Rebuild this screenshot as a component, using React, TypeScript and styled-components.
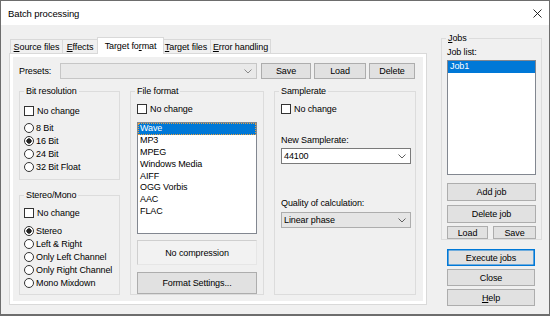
import styled, { createGlobalStyle } from 'styled-components'

const GlobalStyle = createGlobalStyle`
	* {
		box-sizing: border-box;
	}
	body {
		margin: 0;
		background: #fff;
		font-family: 'Liberation Sans', Arial, sans-serif;
	}
`

const Window = styled.div`
	width: 550px;
	height: 316px;
	border: 1px solid #6d6d6d;
	border-bottom-width: 2px;
	background: #f0f0f0;
	display: flex;
	flex-direction: column;
	font-size: 9px;
	letter-spacing: -0.1px;
	color: #000;
`
const TitleBar = styled.div`
	height: 24px;
	flex: none;
	background: #fff;
	display: flex;
	align-items: center;
	justify-content: space-between;
	padding-left: 7px;
	font-size: 9.5px;
`
const CloseBox = styled.div`
	width: 23px;
	height: 24px;
	display: flex;
	align-items: center;
	justify-content: center;
`
const Body = styled.div`
	display: flex;
	padding: 12px 7px 0 8px;
`
const LeftCol = styled.div`
	width: 418px;
	display: flex;
	flex-direction: column;
`
const RightCol = styled.div`
	width: 101px;
	margin-left: 14px;
	display: flex;
	flex-direction: column;
`
const TabRow = styled.div`
	height: 17px;
	display: flex;
	align-items: flex-end;
	padding-left: 1px;
	margin-bottom: -1px;
	position: relative;
	z-index: 1;
`
const Tab = styled.div<{ $active?: boolean; $w: number }>`
	width: ${p => p.$w}px;
	flex: none;
	display: flex;
	align-items: center;
	justify-content: center;
	border: 1px solid #d9d9d9;
	border-bottom: none;
	white-space: nowrap;
	${p =>
		p.$active
			? `
		height: 17px;
		background: #fff;
		margin: 0 -2px 0 -2px;
		padding-bottom: 1px;
		position: relative;
		z-index: 2;
	`
			: `
		height: 14px;
		margin-bottom: 1px;
		background: #f0f0f0;
		& + & { margin-left: -1px; }
	`}
`
const Panel = styled.div`
	height: 252px;
	border: 1px solid #d9d9d9;
	background: #fff;
	padding: 3px;
`
const Page = styled.div`
	height: 100%;
	background: #f0f0f0;
	padding: 6px 6px 0;
	display: flex;
	flex-direction: column;
`
const PresetsRow = styled.div`
	height: 16px;
	display: flex;
	align-items: center;
`
const PresetsLabel = styled.span`
	width: 41px;
`
const ButtonGroup = styled.div`
	display: flex;
	gap: 3px;
	margin-left: 4px;
`
const Combo = styled.div<{ $w?: number; $kind?: 'white' | 'flat' | 'disabled'; $mt?: number }>`
	width: ${p => (p.$w ? `${p.$w}px` : '100%')};
	height: 16px;
	flex: none;
	margin-top: ${p => p.$mt ?? 0}px;
	display: flex;
	align-items: center;
	justify-content: space-between;
	padding: 0 4px 0 2px;
	border: 1px solid
		${p => (p.$kind === 'white' ? '#7a7a7a' : p.$kind === 'disabled' ? '#c6c6c6' : '#adadad')};
	background: ${p => (p.$kind === 'white' ? '#fff' : p.$kind === 'disabled' ? '#e9e9e9' : '#e5e5e5')};
`
const Button = styled.div<{ $w?: number; $h?: number; $mt?: number; $default?: boolean }>`
	width: ${p => (p.$w ? `${p.$w}px` : 'auto')};
	height: ${p => p.$h ?? 17}px;
	flex: ${p => (p.$w ? 'none' : '1')};
	margin-top: ${p => p.$mt ?? 0}px;
	display: flex;
	align-items: center;
	justify-content: center;
	background: #e1e1e1;
	border: 1px solid ${p => (p.$default ? '#0078d7' : '#adadad')};
	box-shadow: ${p => (p.$default ? 'inset 0 0 0 0.6px #0078d7' : 'none')};
	white-space: nowrap;
`
const StackButton = styled(Button)`
	flex: none;
	width: 88px;
	margin-left: 6px;
`
const GroupsRow = styled.div`
	display: flex;
	gap: 10px;
	margin-top: 12px;
	height: 204px;
`
const Column = styled.div`
	width: 101px;
	display: flex;
	flex-direction: column;
`
const Group = styled.div<{ $w?: number; $h: number; $px: number; $mt?: number }>`
	width: ${p => (p.$w ? `${p.$w}px` : '100%')};
	height: ${p => p.$h}px;
	flex: none;
	margin-top: ${p => p.$mt ?? 0}px;
	border: 1px solid #dcdcdc;
	padding: 0 ${p => p.$px}px;
	display: flex;
	flex-direction: column;
`
const GroupTitle = styled.span<{ $px: number }>`
	align-self: flex-start;
	margin: -6px 0 0 ${p => 4 - p.$px}px;
	padding: 0 2px;
	line-height: 11px;
	background: #f0f0f0;
`
const Label = styled.span<{ $mt: number }>`
	display: block;
	line-height: 11px;
	margin-top: ${p => p.$mt}px;
`
const CheckRow = styled.div<{ $mt: number }>`
	height: 13px;
	margin-top: ${p => p.$mt}px;
	display: flex;
	align-items: center;
	gap: 3px;
`
const CheckBox = styled.span`
	width: 10px;
	height: 10px;
	border: 1px solid #333;
	background: #fff;
`
const RadioList = styled.div<{ $mt: number }>`
	margin-top: ${p => p.$mt}px;
	display: flex;
	flex-direction: column;
`
const RadioRow = styled.div`
	height: 13px;
	display: flex;
	align-items: center;
	gap: 2px;
`
const RadioDot = styled.span<{ $on?: boolean }>`
	width: 10px;
	height: 10px;
	border-radius: 50%;
	border: 1px solid #333;
	background: ${p => (p.$on ? 'radial-gradient(circle, #222 0 2.4px, #fff 2.9px)' : '#fff')};
`
const ListBox = styled.div<{ $h: number; $mt: number }>`
	height: ${p => p.$h}px;
	flex: none;
	margin-top: ${p => p.$mt}px;
	border: 1px solid #828790;
	background: #fff;
	display: flex;
	flex-direction: column;
`
const ListItem = styled.div<{ $selected?: boolean; $focus?: boolean }>`
	height: 11.9px;
	line-height: 11.9px;
	padding-left: 2px;
	background: ${p => (p.$selected ? '#0078d7' : 'transparent')};
	color: ${p => (p.$selected ? '#fff' : '#000')};
	outline: ${p => (p.$focus ? '1px dotted #e8a040' : 'none')};
	outline-offset: -1px;
`
const InfoBox = styled.div`
	height: 25px;
	margin-top: 6px;
	display: flex;
	align-items: center;
	justify-content: center;
	background: #f2f2f2;
	border: 1px solid;
	border-color: #cfcfcf #e6e6e6 #e6e6e6 #cfcfcf;
`
const SplitRow = styled.div`
	display: flex;
	gap: 5px;
	margin-top: 3px;
`

const Chevron = ({ color = '#606060' }: { color?: string }) => (
	<svg width="8" height="5" viewBox="0 0 8 5">
		<polyline points="0.5,0.5 4,4 7.5,0.5" fill="none" stroke={color} strokeWidth="1" />
	</svg>
)

const Check = ({ mt, children }: { mt: number; children: string }) => (
	<CheckRow $mt={mt}>
		<CheckBox />
		<span>{children}</span>
	</CheckRow>
)

const Radios = ({ mt, items, on }: { mt: number; items: string[]; on: number }) => (
	<RadioList $mt={mt}>
		{items.map((item, i) => (
			<RadioRow key={item}>
				<RadioDot $on={i === on} />
				<span>{item}</span>
			</RadioRow>
		))}
	</RadioList>
)

const formats = ['Wave', 'MP3', 'MPEG', 'Windows Media', 'AIFF', 'OGG Vorbis', 'AAC', 'FLAC']

export default function App() {
	return (
		<>
			<GlobalStyle />
			<Window>
				<TitleBar>
					<span>Batch processing</span>
					<CloseBox>
						<svg width="9" height="9" viewBox="0 0 9 9">
							<path d="M0.5 0.5 L8.5 8.5 M8.5 0.5 L0.5 8.5" stroke="#111" strokeWidth="0.9" />
						</svg>
					</CloseBox>
				</TitleBar>
				<Body>
					<LeftCol>
						<TabRow>
							<Tab $w={53}>
								<span>
									<u>S</u>ource files
								</span>
							</Tab>
							<Tab $w={36}>
								<span>
									<u>E</u>ffects
								</span>
							</Tab>
							<Tab $active $w={67}>
								<span>
									Target fo<u>r</u>mat
								</span>
							</Tab>
							<Tab $w={50}>
								<span>
									<u>T</u>arget files
								</span>
							</Tab>
							<Tab $w={61}>
								<span>
									<u>E</u>rror handling
								</span>
							</Tab>
						</TabRow>
						<Panel>
							<Page>
								<PresetsRow>
									<PresetsLabel>Presets:</PresetsLabel>
									<Combo $w={197} $kind="disabled">
										<span />
										<Chevron color="#8a8a8a" />
									</Combo>
									<ButtonGroup>
										<Button $w={50} $h={16}>
											Save
										</Button>
										<Button $w={52} $h={16}>
											Load
										</Button>
										<Button $w={46} $h={16}>
											Delete
										</Button>
									</ButtonGroup>
								</PresetsRow>
								<GroupsRow>
									<Column>
										<Group $h={89} $px={4}>
											<GroupTitle $px={4}>Bit resolution</GroupTitle>
											<Check mt={7}>No change</Check>
											<Radios mt={4} items={['8 Bit', '16 Bit', '24 Bit', '32 Bit Float']} on={1} />
										</Group>
										<Group $h={100} $px={4} $mt={15}>
											<GroupTitle $px={4}>Stereo/Mono</GroupTitle>
											<Check mt={5}>No change</Check>
											<Radios
												mt={5}
												items={[
													'Stereo',
													'Left & Right',
													'Only Left Channel',
													'Only Right Channel',
													'Mono Mixdown',
												]}
												on={0}
											/>
										</Group>
									</Column>
									<Group $w={134} $h={204} $px={6}>
										<GroupTitle $px={6}>File format</GroupTitle>
										<Check mt={5}>No change</Check>
										<ListBox $h={112} $mt={7}>
											{formats.map((f, i) => (
												<ListItem key={f} $selected={i === 0} $focus={i === 0}>
													{f}
												</ListItem>
											))}
										</ListBox>
										<InfoBox>No compression</InfoBox>
										<Button $mt={7}>Format Settings...</Button>
									</Group>
									<Group $w={142} $h={204} $px={6}>
										<GroupTitle $px={6}>Samplerate</GroupTitle>
										<Check mt={5}>No change</Check>
										<Label $mt={20}>New Samplerate:</Label>
										<Combo $w={130} $kind="white" $mt={2}>
											<span>44100</span>
											<Chevron />
										</Combo>
										<Label $mt={34}>Quality of calculation:</Label>
										<Combo $w={130} $kind="flat" $mt={3}>
											<span>Linear phase</span>
											<Chevron />
										</Combo>
									</Group>
								</GroupsRow>
							</Page>
						</Panel>
					</LeftCol>
					<RightCol>
						<Group $h={202} $px={5} $mt={1}>
							<GroupTitle $px={5}>
								<u>J</u>obs
							</GroupTitle>
							<Label $mt={3}>Job list:</Label>
							<ListBox $h={115} $mt={2}>
								<ListItem $selected>Job1</ListItem>
							</ListBox>
							<Button $mt={8}>Add job</Button>
							<Button $mt={4}>Delete job</Button>
							<SplitRow>
								<Button $w={41} $h={13}>
									Load
								</Button>
								<Button $h={13}>Save</Button>
							</SplitRow>
						</Group>
						<StackButton $mt={9} $default>
							Execute jobs
						</StackButton>
						<StackButton $mt={3}>Close</StackButton>
						<StackButton $mt={3}>
							<span>
								<u>H</u>elp
							</span>
						</StackButton>
					</RightCol>
				</Body>
			</Window>
		</>
	)
}
